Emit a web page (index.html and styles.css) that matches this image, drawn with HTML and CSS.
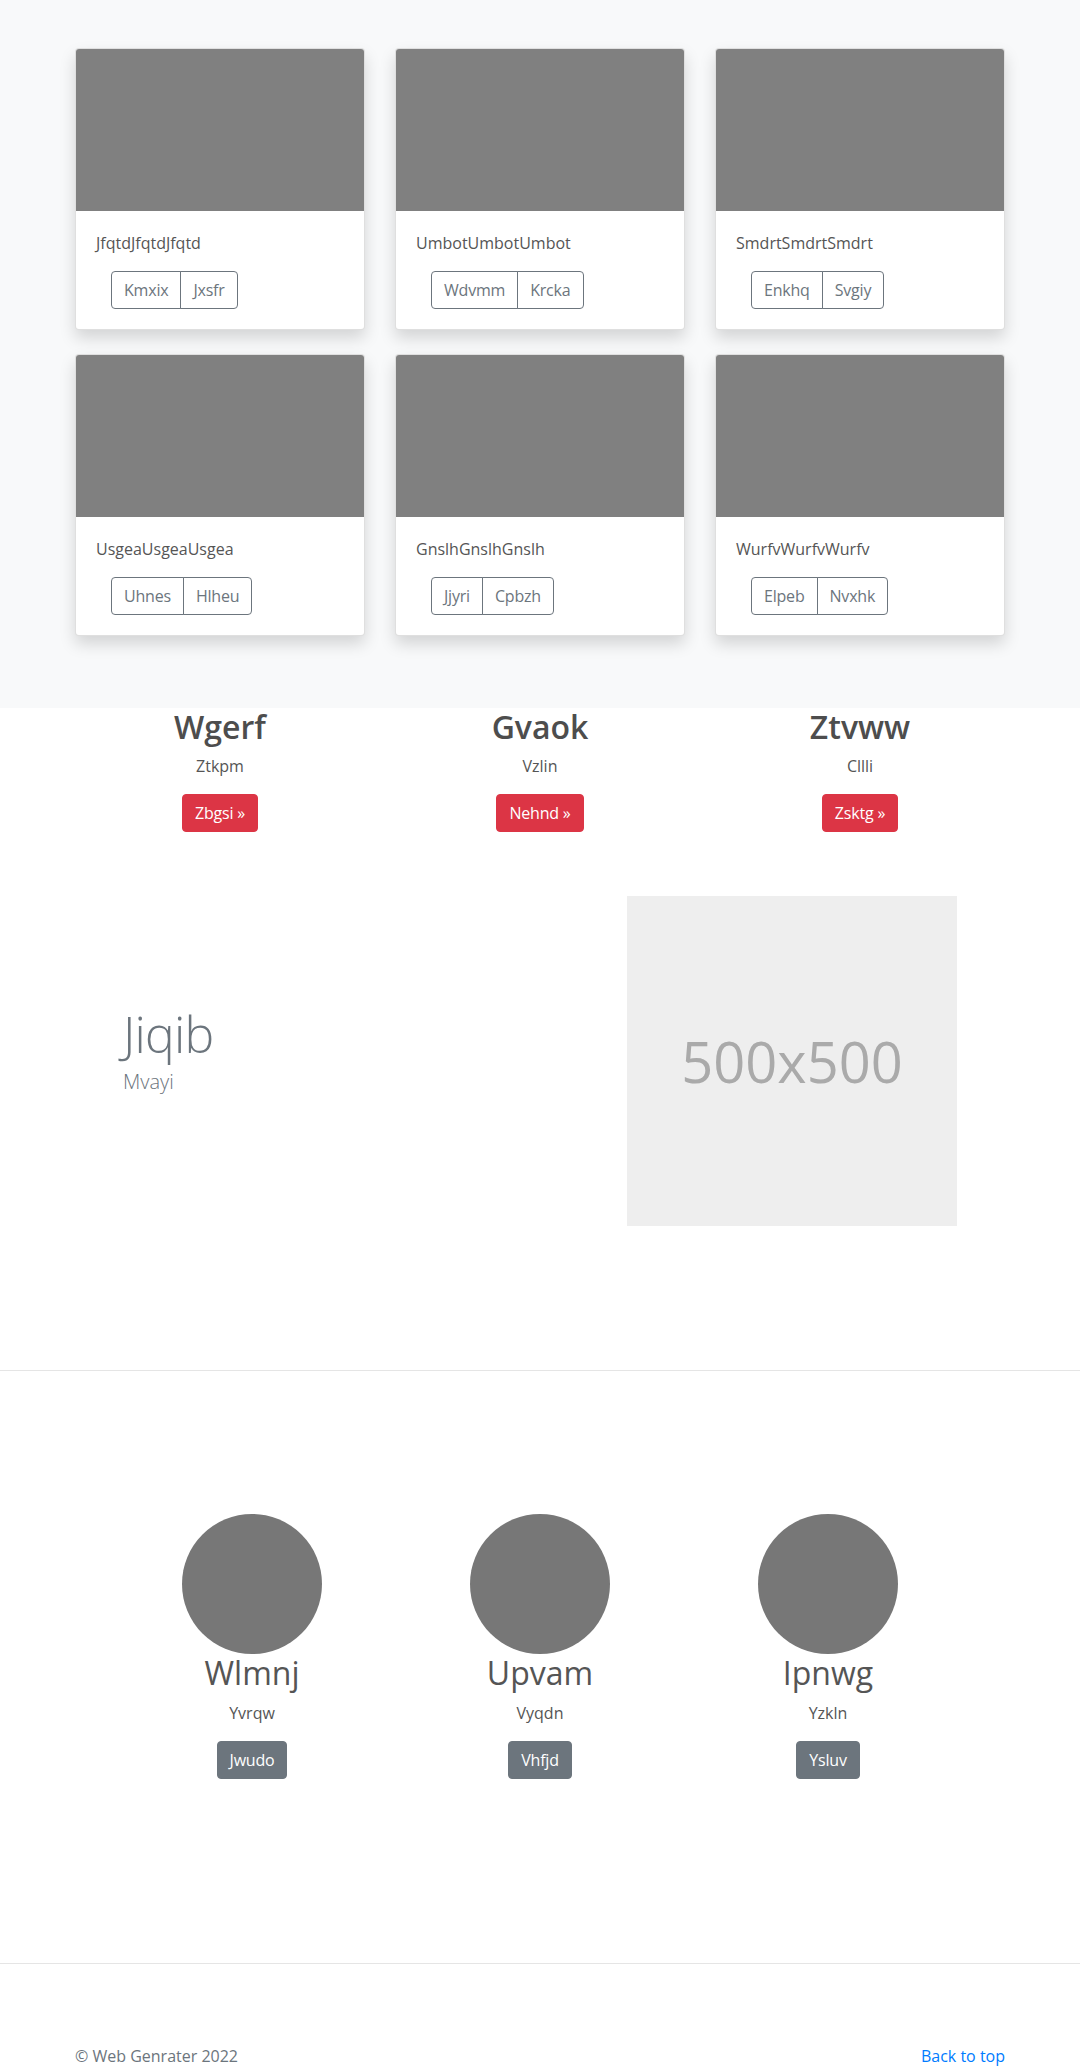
FILE: index.html
```html
<!DOCTYPE html>
<html lang="en">
<head>
    <meta charset="UTF-8">
    <title>Album</title>
    <meta name="viewport" content="width=device-width, initial-scale=1.0">
    <link rel="stylesheet" href="styles.css">
</head>
<body>
    <section class="album">
        <div class="container">
            <div class="card-grid">
                <div class="card">
                    <div class="card-img"></div>
                    <div class="card-body">
                        <p class="card-text">JfqtdJfqtdJfqtd</p>
                        <div class="btn-group">
                            <button class="btn btn-outline">Kmxix</button>
                            <button class="btn btn-outline">Jxsfr</button>
                        </div>
                    </div>
                </div>
                <div class="card">
                    <div class="card-img"></div>
                    <div class="card-body">
                        <p class="card-text">UmbotUmbotUmbot</p>
                        <div class="btn-group">
                            <button class="btn btn-outline">Wdvmm</button>
                            <button class="btn btn-outline">Krcka</button>
                        </div>
                    </div>
                </div>
                <div class="card">
                    <div class="card-img"></div>
                    <div class="card-body">
                        <p class="card-text">SmdrtSmdrtSmdrt</p>
                        <div class="btn-group">
                            <button class="btn btn-outline">Enkhq</button>
                            <button class="btn btn-outline">Svgiy</button>
                        </div>
                    </div>
                </div>
                <div class="card">
                    <div class="card-img"></div>
                    <div class="card-body">
                        <p class="card-text">UsgeaUsgeaUsgea</p>
                        <div class="btn-group">
                            <button class="btn btn-outline">Uhnes</button>
                            <button class="btn btn-outline">Hlheu</button>
                        </div>
                    </div>
                </div>
                <div class="card">
                    <div class="card-img"></div>
                    <div class="card-body">
                        <p class="card-text">GnslhGnslhGnslh</p>
                        <div class="btn-group">
                            <button class="btn btn-outline">Jjyri</button>
                            <button class="btn btn-outline">Cpbzh</button>
                        </div>
                    </div>
                </div>
                <div class="card">
                    <div class="card-img"></div>
                    <div class="card-body">
                        <p class="card-text">WurfvWurfvWurfv</p>
                        <div class="btn-group">
                            <button class="btn btn-outline">Elpeb</button>
                            <button class="btn btn-outline">Nvxhk</button>
                        </div>
                    </div>
                </div>
            </div>
        </div>
    </section>

    <section class="container marketing">
        <div class="col">
            <h2>Wgerf</h2>
            <p>Ztkpm</p>
            <p><a class="btn btn-danger" href="#">Zbgsi &raquo;</a></p>
        </div>
        <div class="col">
            <h2>Gvaok</h2>
            <p>Vzlin</p>
            <p><a class="btn btn-danger" href="#">Nehnd &raquo;</a></p>
        </div>
        <div class="col">
            <h2>Ztvww</h2>
            <p>Cllli</p>
            <p><a class="btn btn-danger" href="#">Zsktg &raquo;</a></p>
        </div>
    </section>

    <section class="container featurette-wrap">
        <div class="featurette">
            <div class="featurette-text">
                <h2 class="featurette-heading">Jiqib</h2>
                <p class="lead">Mvayi</p>
            </div>
            <div class="featurette-image">500x500</div>
        </div>
    </section>

    <hr class="divider">

    <section class="container team">
        <div class="team-grid">
            <div class="member">
                <div class="avatar"></div>
                <h2>Wlmnj</h2>
                <p>Yvrqw</p>
                <p><a class="btn btn-secondary" href="#">Jwudo</a></p>
            </div>
            <div class="member">
                <div class="avatar"></div>
                <h2>Upvam</h2>
                <p>Vyqdn</p>
                <p><a class="btn btn-secondary" href="#">Vhfjd</a></p>
            </div>
            <div class="member">
                <div class="avatar"></div>
                <h2>Ipnwg</h2>
                <p>Yzkln</p>
                <p><a class="btn btn-secondary" href="#">Ysluv</a></p>
            </div>
        </div>
    </section>

    <hr class="divider">

    <footer class="container footer">
        <p>&copy; Web Genrater 2022</p>
        <p><a href="#">Back to top</a></p>
    </footer>
</body>
</html>
```

FILE: styles.css
```css
body { margin: 0; font-family: "Open Sans", "Noto Sans", Arial, sans-serif; font-size: 16px; line-height: 1.5; color: #555; background: #fff; }
p { margin: 0 0 16px 0; }
h2 { margin: 0 0 8px 0; font-size: 32px; line-height: 1.2; }
a { color: #007bff; text-decoration: none; }

.container { width: 930px; margin: 0 auto; }

/* album */
.album { background: #f8f9fa; padding: 48px 0 72px 0; }
.card-grid { display: grid; grid-template-columns: repeat(3, 1fr); column-gap: 30px; row-gap: 24px; }
.card { background: #fff; border: 1px solid rgba(0,0,0,0.125); border-radius: 4px; box-shadow: 0 8px 16px rgba(0,0,0,0.15); overflow: hidden; }
.card-img { height: 162px; background: #808080; }
.card-body { padding: 20px; }
.card-text { color: #555; }
.btn-group { display: inline-flex; margin-left: 15px; }
.btn { display: inline-block; font-family: inherit; font-size: 16px; line-height: 1.5; padding: 6px 12px; border: 1px solid transparent; border-radius: 4px; background: none; cursor: pointer; letter-spacing: -0.2px; }
.btn-outline { color: #6c757d; border-color: #6c757d; }
.btn-group .btn:first-child { border-top-right-radius: 0; border-bottom-right-radius: 0; }
.btn-group .btn + .btn { margin-left: -1px; border-top-left-radius: 0; border-bottom-left-radius: 0; }
.btn-danger { background: #dc3545; border-color: #dc3545; color: #fff; }
.btn-secondary { background: #6c757d; border-color: #6c757d; color: #fff; }

/* marketing */
.marketing { display: grid; grid-template-columns: repeat(3, 1fr); column-gap: 30px; text-align: center; }
.marketing .col { margin-bottom: 24px; }
.marketing h2 { font-weight: 600; color: #4d4d4d; }

/* featurette */
.featurette-wrap { padding: 24px 0 144px 0; }
.featurette { display: flex; align-items: center; gap: 30px; padding: 0 48px; }
.featurette-text { flex: 1; }
.featurette-heading { font-size: 50px; font-weight: 300; line-height: 1; letter-spacing: -0.8px; color: #6c757d; margin-bottom: 8px; }
.lead { font-size: 20px; font-weight: 300; color: #6c757d; }
.featurette-image { width: 330px; height: 330px; background: #eee; color: #aaa; font-size: 56px; display: flex; align-items: center; justify-content: center; }

.divider { margin: 0; border: 0; border-top: 1px solid rgba(0,0,0,0.1); }

/* team */
.team { padding: 143px 0 144px 0; }
.team-grid { display: grid; grid-template-columns: repeat(3, 1fr); column-gap: 30px; padding: 0 48px; text-align: center; }
.member { margin-bottom: 24px; }
.avatar { width: 140px; height: 140px; border-radius: 50%; background: #777; margin: 0 auto; }
.member h2 { font-weight: 400; color: #555; }

/* footer */
.footer { display: flex; justify-content: space-between; padding-top: 80px; color: #6c757d; }
```
